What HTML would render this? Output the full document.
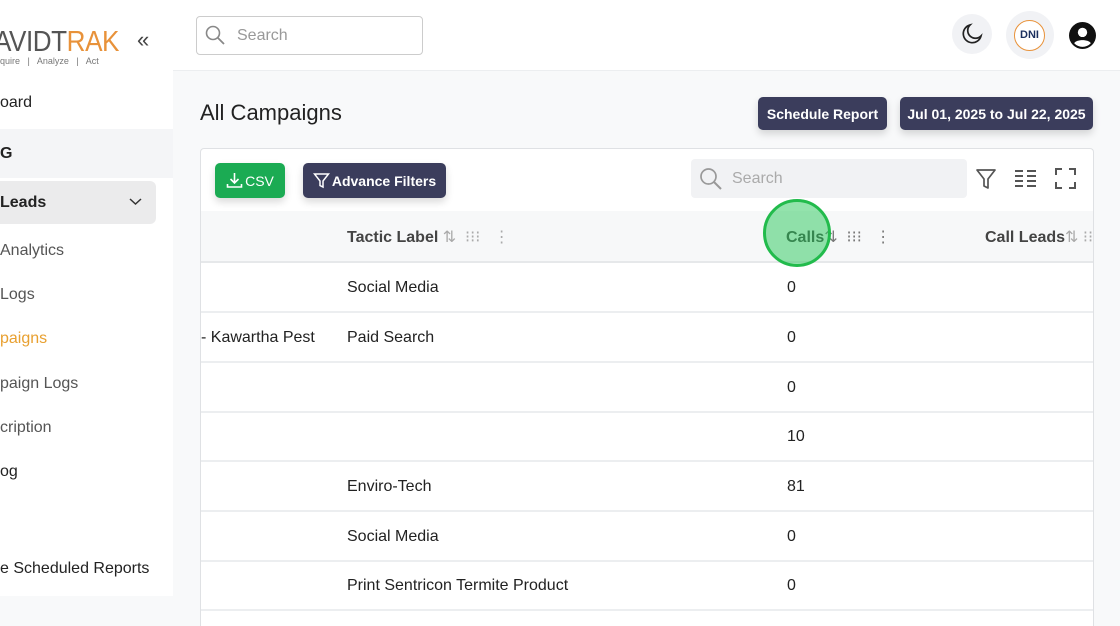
<!DOCTYPE html>
<html><head><meta charset="utf-8"><style>
*{box-sizing:border-box;margin:0;padding:0}
html,body{width:1120px;height:626px;overflow:hidden}
body{background:#f8f9fa;font-family:"Liberation Sans",sans-serif;position:relative;color:#222}
.abs{position:absolute}
.side{left:0;top:0;width:173px;height:596px;background:#fff}
.nav{position:absolute;left:0;font-size:16px;white-space:nowrap}
.top{left:173px;top:0;width:947px;height:71px;background:#fff;border-bottom:1px solid #eceef0}
.btn{background:#3b3d5c;color:#fff;font-weight:bold;font-size:14px;border-radius:5px;display:flex;align-items:center;justify-content:center;box-shadow:0 4px 8px rgba(0,0,0,.15)}
.card{left:200px;top:148px;width:894px;height:478px;background:#fff;border:1px solid #dfe1e4;border-bottom:none;border-radius:4px 4px 0 0;overflow:hidden}
.row{position:absolute;left:0;width:894px;height:50px;border-bottom:2px solid #eceef0;font-size:16px}
.row span{position:absolute;top:16px}
</style></head><body>
<div class="abs side">
  <div class="abs" style="left:-6px;top:26px;font-size:29px;letter-spacing:-0.5px;color:#555;white-space:nowrap;transform:scaleX(0.9);transform-origin:0 0">AVIDT<span style="color:#e8923a">RAK</span></div>
  <div class="abs" style="left:0;top:56px;font-size:9px;color:#777;white-space:nowrap">quire &nbsp; | &nbsp; Analyze &nbsp; | &nbsp; Act</div>
  <div class="abs" style="left:137px;top:27px;font-size:22px;color:#444">«</div>
  <div class="nav" style="top:94px">oard</div>
  <div class="abs" style="left:0;top:129px;width:173px;height:49px;background:#f4f5f7"></div>
  <div class="nav" style="top:145px;font-weight:bold">G</div>
  <div class="abs" style="left:0;top:181px;width:156px;height:43px;background:#ebebec;border-radius:0 6px 6px 0"></div>
  <div class="nav" style="top:194px;font-weight:bold">Leads</div>
  <svg class="abs" style="left:129px;top:197px" width="13" height="9" viewBox="0 0 13 9"><path d="M1 2l5.5 5 5.5-5" fill="none" stroke="#333" stroke-width="1.5"/></svg>
  <div class="nav" style="top:242px;color:#555">Analytics</div>
  <div class="nav" style="top:286px;color:#555">Logs</div>
  <div class="nav" style="top:330px;color:#e8a030">paigns</div>
  <div class="nav" style="top:375px;color:#555">paign Logs</div>
  <div class="nav" style="top:419px;color:#555">cription</div>
  <div class="nav" style="top:463px">og</div>
  <div class="nav" style="top:560px">e Scheduled Reports</div>
</div>
<div class="abs top">
  <div class="abs" style="left:23px;top:16px;width:227px;height:39px;border:1px solid #ccc;border-radius:4px;background:#fff"></div>
  <svg class="abs" style="left:32px;top:25px" width="20" height="20" viewBox="0 0 20 20"><circle cx="8" cy="8" r="6.5" fill="none" stroke="#888" stroke-width="1.6"/><path d="M13 13l6 6" stroke="#888" stroke-width="1.8"/></svg>
  <div class="abs" style="left:64px;top:27px;font-size:16px;color:#999">Search</div>
  <div class="abs" style="left:779px;top:14px;width:40px;height:40px;border-radius:50%;background:#f1f2f5"></div>
  <svg class="abs" style="left:788px;top:23px" width="22" height="22" viewBox="0 0 22 22"><path d="M9 2a9 9 0 1 0 11 11A7.5 7.5 0 0 1 9 2z" fill="none" stroke="#222" stroke-width="1.7"/></svg>
  <div class="abs" style="left:833px;top:11px;width:48px;height:48px;border-radius:50%;background:#f1f2f5"></div>
  <div class="abs" style="left:841px;top:20px;width:31px;height:31px;border-radius:50%;border:1px solid #e8923a;background:#fff;font-size:11px;font-weight:bold;color:#1b2f5e;text-align:center;line-height:29px">DNI</div>
  <svg class="abs" style="left:896px;top:22px" width="27" height="27" viewBox="0 0 26 26"><circle cx="13" cy="13" r="13" fill="#111"/><circle cx="13" cy="10" r="4.5" fill="#fff"/><path d="M5 20.5c2-4 14-4 16 0a11 11 0 0 1-16 0z" fill="#fff"/></svg>
</div>
<div class="abs" style="left:200px;top:100px;font-size:22px;color:#222">All Campaigns</div>
<div class="abs btn" style="left:758px;top:97px;width:129px;height:33px">Schedule Report</div>
<div class="abs btn" style="left:900px;top:97px;width:193px;height:33px">Jul 01, 2025 to Jul 22, 2025</div>
<div class="abs card">
  <div class="abs btn" style="left:14px;top:14px;width:70px;height:35px;background:#1bab53">
    <svg width="17" height="17" viewBox="0 0 17 17" style="margin-right:2px"><path d="M8.5 1v10M4.5 7l4 4 4-4M1.5 12v3h14v-3" fill="none" stroke="#fff" stroke-width="1.6"/></svg><span style="font-weight:normal">CSV</span></div>
  <div class="abs btn" style="left:102px;top:14px;width:143px;height:35px">
    <svg width="17" height="17" viewBox="0 0 17 17" style="margin-right:2px"><path d="M1.5 2h14l-5.5 7v6l-3-1.5V9z" fill="none" stroke="#fff" stroke-width="1.5"/></svg>Advance Filters</div>
  <div class="abs" style="left:490px;top:10px;width:276px;height:39px;background:#f1f2f4;border-radius:4px"></div>
  <svg class="abs" style="left:498px;top:18px" width="24" height="24" viewBox="0 0 24 24"><circle cx="9.5" cy="9.5" r="7.5" fill="none" stroke="#999" stroke-width="1.7"/><path d="M15 15l7 7" stroke="#999" stroke-width="2"/></svg>
  <div class="abs" style="left:531px;top:21px;font-size:16px;color:#aaa">Search</div>
  <svg class="abs" style="left:774px;top:18px" width="22" height="24" viewBox="0 0 22 24"><path d="M2 3h18l-7 9v9l-4-2v-7z" fill="none" stroke="#555" stroke-width="1.7" stroke-linejoin="round"/></svg>
  <svg class="abs" style="left:814px;top:20px" width="21" height="18" viewBox="0 0 21 18"><g stroke="#555" stroke-width="2"><path d="M0 2h8M12 2h9M0 7h8M12 7h9M0 12h8M12 12h9M0 17h8M12 17h9"/></g></svg>
  <svg class="abs" style="left:854px;top:19px" width="21" height="21" viewBox="0 0 21 21"><path d="M1 7V1h6M14 1h6v6M20 14v6h-6M7 20H1v-6" fill="none" stroke="#555" stroke-width="2"/></svg>
  <div class="abs" style="left:0;top:62px;width:894px;height:52px;background:#f7f8f9;border-bottom:2px solid #e6e8ea"></div>
  <div class="abs" style="left:146px;top:78px;font-size:16px;font-weight:bold;color:#444">Tactic Label<span style="color:#aaa;font-weight:normal"> ⇅ &nbsp;⁝⁝⁝ &nbsp;&nbsp;⋮</span></div>
  <div class="abs" style="left:585px;top:78px;font-size:16px;font-weight:bold;color:#444">Calls<span style="color:#777;font-weight:normal">⇅ &nbsp;⁝⁝⁝ &nbsp;&nbsp;⋮</span></div>
  <div class="abs" style="left:784px;top:78px;font-size:16px;font-weight:bold;color:#444;white-space:nowrap">Call Leads<span style="color:#aaa;font-weight:normal">⇅ ⁝⁝</span></div>
  <div class="abs" style="left:562px;top:50px;width:68px;height:68px;border-radius:50%;background:rgba(40,200,90,.5);border:3px solid #22bb4c"></div>
  <div class="row" style="top:114px"><span style="left:146px">Social Media</span><span style="left:586px">0</span></div>
  <div class="row" style="top:164px"><span style="left:0">- Kawartha Pest</span><span style="left:146px">Paid Search</span><span style="left:586px">0</span></div>
  <div class="row" style="top:214px"><span style="left:586px">0</span></div>
  <div class="row" style="top:263px"><span style="left:586px">10</span></div>
  <div class="row" style="top:313px"><span style="left:146px">Enviro-Tech</span><span style="left:586px">81</span></div>
  <div class="row" style="top:363px"><span style="left:146px">Social Media</span><span style="left:586px">0</span></div>
  <div class="row" style="top:412px"><span style="left:146px">Print Sentricon Termite Product</span><span style="left:586px">0</span></div>
</div>
</body></html>
